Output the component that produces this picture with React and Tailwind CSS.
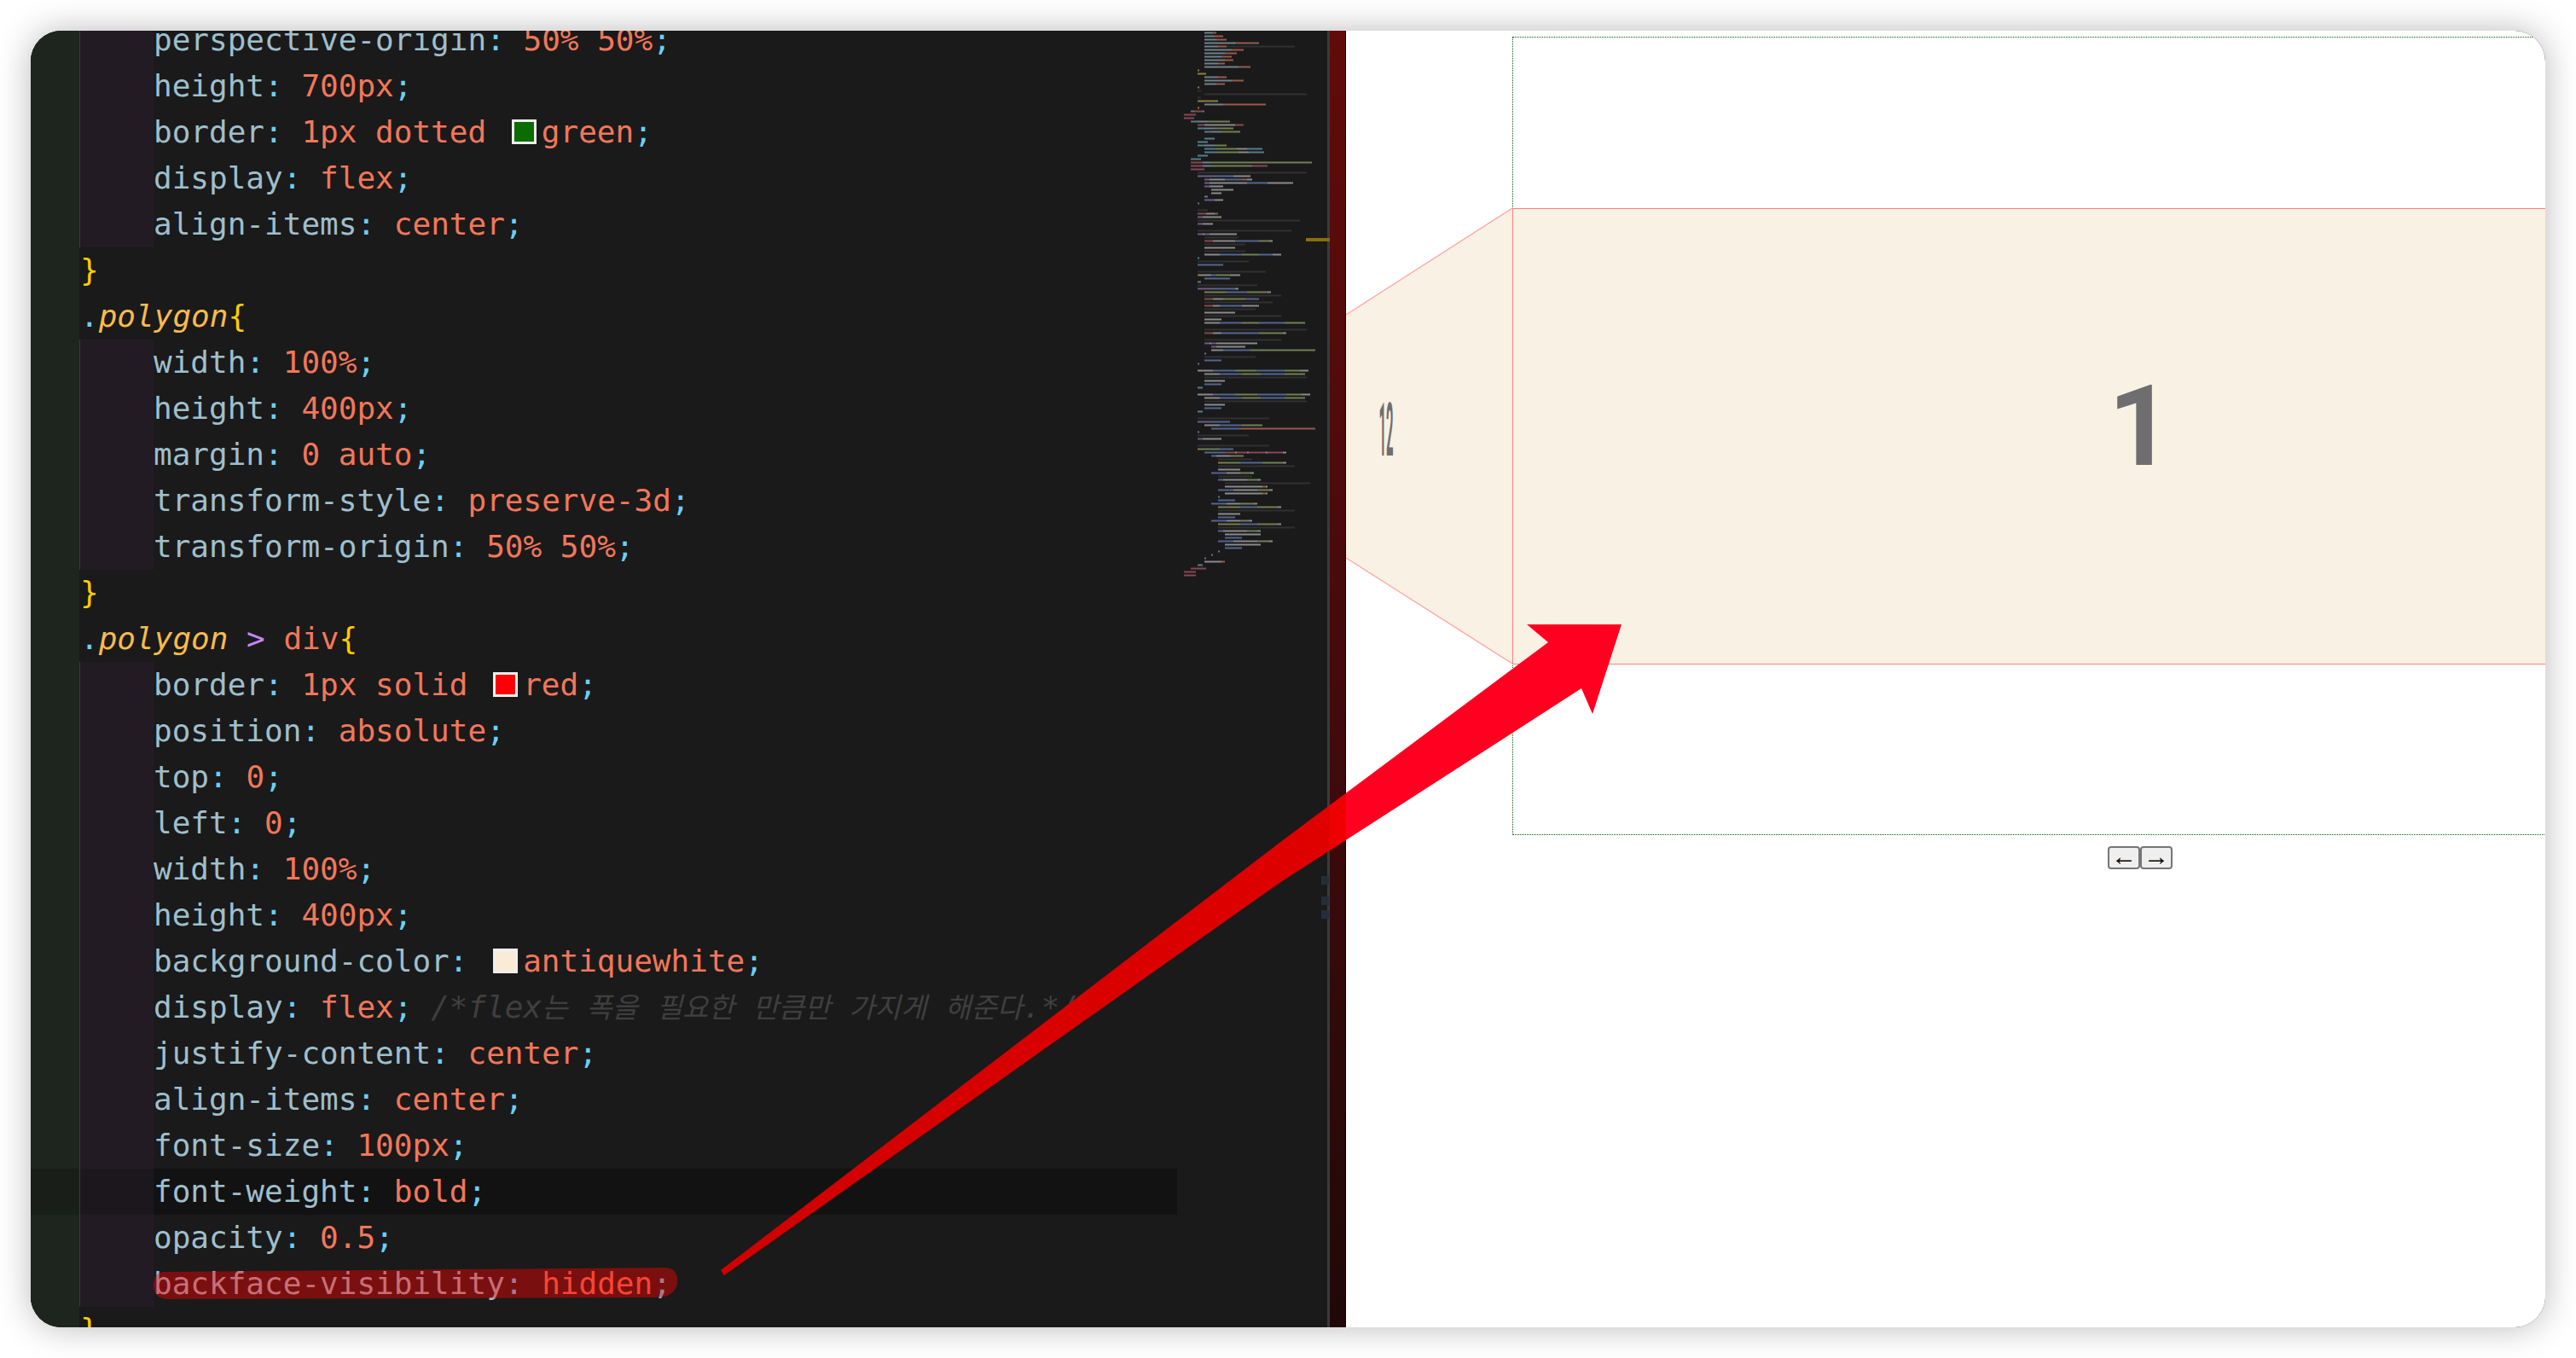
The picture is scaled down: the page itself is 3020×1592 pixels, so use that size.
import React from 'react';

// tiny colour blocks for the editor minimap: "col len+colour ..."
const mapColors = {
  p: '#8fa6b0', o: '#c2705c', c: '#383838', b: '#6680b8', g: '#8ea364', y: '#b59f52',
  w: '#b0b0b0', r: '#ad5668', v: '#8f70ae', t: '#6a9fb2',
};

const minimap = `12 5p 2o|12 6p 5o|12 7p 6o|12 17p 1w 14o|12 8p 5o 40c|12 16p 7o|12 12p 7o|12 10p 6o|12 12p 5o|12 8p 4o|12 20p 7o|8 1y|8 5y|12 8p 5o|12 16p 7o|12 7p 5o|8 1y|8 2c|12 60c|8 2c|8 12y|12 11p 25o|8 1y|4 2t 5r 1t|0 7r|0 6r|4 4t 6p 13g|8 4r 18w 5r|8 4t 6p 11g|12 4t 6p 11g||12 6t|8 6t|8 4t 6p 7g|12 7t 12g 6w 9t|12 7t 13g 6w 9t|8 6t|4 6t|4 7r 5p 59g|4 7r 5p 24g 9r|4 8r|8 64c|8 8v 13b 10w|12 3v 9w 10b 3o 3w|12 3v 22w 12b 15w|12 3v 8w|16 13w|16 6w|12 2t|12 6v 5w|8 1t||8 6c|8 5r 5w 2o|8 3v 11w|8 60c|8 3v 6w||8 55c|8 3v 1w 3v 16w|12 20c|12 5r 13w 14b 6g 2w|12 24c|12 18w|12 24c|12 9w 13b 10g 8b 5w|8 1t|8 30c|8 15b||8 40c|8 1y 7w 3b 8g 6w|12 15b|8 2t|8 35c|8 8v 14b 2w|12 1y 12g 12b 12g 2w|12 45c|12 5r 6w 13g 8b|12 40c|12 5r 4w 13b 10w|12 30c|12 18w|12 45c|12 10w|12 9w 13b 10g 15b 12g||12 60c|12 5r 5w 22b 14g 2w||12 45c|12 3v 1w 3v 24w|16 3v 17w|16 7w 16b 38g|12 1t|12 30c|12 10b|8 1t||8 9w 13b 12g 17b 9g 5w|12 9w 13b 11g 14b 12g|12 60c|12 12w|12 10b|8 3t||8 9w 13b 13g 17b 9g 5w|12 9w 13b 11g 14b 12g|12 60c|12 12w|12 10b|8 3t||8 42c|8 8v 11b|12 9w 13b 12g|16 17b 44o|8 1t|8 30c|8 3v 11w||8 42c|8 1y 12g 8b|12 12b 6r 1w 6r 1w 10r 1w 9r 2w|16 3b 8w 8g|20 20c|20 1y 12g 13b 12g 2w|20 45c|20 13w|16 9b 8w 6g 2w|20 20c|20 3b 14w 6g 2w|24 50c|24 22w 2o 1w|20 9b 14w 7g 2w|24 22w 2o 1w|20 1t|20 10b|16 9b 8w 8g 2w|20 1y 12g 10b 12g 2w|20 45c|20 13w|20 10b|16 9b 8w 5g 2w|20 1y 12g 10b 12g 2w|20 45c|20 3b 14w 6g 2w|24 21w|24 10b|20 9b 14w 7g 2w|24 21w|24 10b|20 1t|16 1t|12 1t|12 10w 2o|8 3t|4 9r|0 7r|0 7r`.split('|');

const Minimap = () => (
  <svg className="block w-[176px] h-[1520px] shrink-0 bg-[#1a1a1a]" viewBox="0 0 176 1520">
    {minimap.map((line, i) => {
      if (!line) return null;
      const parts = line.split(' ');
      let col = Number(parts[0]);
      return parts.slice(1).map((seg, j) => {
        const len = parseInt(seg, 10);
        const x = 8 + col * 2;
        col += len;
        return (
          <rect key={i + '-' + j} x={x} y={1.5 + i * 4} width={len * 2} height={2} opacity={0.75} fill={mapColors[seg[seg.length - 1]]} />
        );
      });
    })}
  </svg>
);

const Key = ({ children }) => <span className="text-[#9fbfcc]">{children}</span>;
const Val = ({ children }) => <span className="text-[#f2775a]">{children}</span>;
const Punc = ({ children }) => <span className="text-[#6ccff6]">{children}</span>;
const Brace = ({ children }) => <span className="text-[#ffcc00]">{children}</span>;
const Sel = ({ children }) => <span className="italic text-[#f8bb4e]">{children}</span>;
const Ko = ({ children }) => <span className="text-[33px]">{children}</span>;

const Swatch = ({ className }) => (
  <span className={`inline-block align-[-2px] w-[29px] h-[29px] ml-[8px] mr-[6px] border-[3px] border-[#eeeeee] ${className}`} />
);

const Line = ({ indent, active, children }) => (
  <div className="flex h-[54px] shrink-0 leading-[54px] whitespace-pre">
    <div className={`w-[57px] shrink-0 ${active ? 'bg-[#191e18]' : 'bg-[#1e241e]'}`} />
    <div className={`w-px shrink-0 ${indent ? 'bg-[#3a3a3c]' : 'bg-[#1a1a1a]'}`} />
    {indent && <div className={`w-[86px] shrink-0 ${active ? 'bg-[#1c171d]' : 'bg-[#231b24]'}`} />}
    <div className={`flex-1 ${active ? 'bg-[#121212]' : ''}`}>{children}</div>
  </div>
);

const Decl = ({ name, value, active, children }) => (
  <Line indent active={active}>
    <Key>{name}</Key>
    <Punc>: </Punc>
    <Val>{value}</Val>
    <Punc>;</Punc>
    {children}
  </Line>
);

const CodePane = () => (
  <div className="flex flex-col w-[1344px] h-[1536px] shrink-0 -mt-[16px] text-[36px] font-['DejaVu_Sans_Mono','Noto_Sans_CJK_KR',monospace] bg-[#1e241e]">
    <div className="flex flex-col bg-[#1a1a1a]">
      <Decl name="perspective-origin" value="50% 50%" />
      <Decl name="height" value="700px" />
      <Line indent>
        <Key>border</Key>
        <Punc>: </Punc>
        <Val>1px dotted </Val>
        <Swatch className="bg-[#0b6d00]" />
        <Val>green</Val>
        <Punc>;</Punc>
      </Line>
      <Decl name="display" value="flex" />
      <Decl name="align-items" value="center" />
      <Line><Brace>{'}'}</Brace></Line>
      <Line><Punc>.</Punc><Sel>polygon</Sel><Brace>{'{'}</Brace></Line>
      <Decl name="width" value="100%" />
      <Decl name="height" value="400px" />
      <Decl name="margin" value="0 auto" />
      <Decl name="transform-style" value="preserve-3d" />
      <Decl name="transform-origin" value="50% 50%" />
      <Line><Brace>{'}'}</Brace></Line>
      <Line>
        <Punc>.</Punc><Sel>polygon</Sel>
        <span className="text-[#c586f0]"> &gt; </span>
        <Val>div</Val><Brace>{'{'}</Brace>
      </Line>
      <Line indent>
        <Key>border</Key>
        <Punc>: </Punc>
        <Val>1px solid </Val>
        <Swatch className="bg-[#fb0007]" />
        <Val>red</Val>
        <Punc>;</Punc>
      </Line>
      <Decl name="position" value="absolute" />
      <Decl name="top" value="0" />
      <Decl name="left" value="0" />
      <Decl name="width" value="100%" />
      <Decl name="height" value="400px" />
      <Line indent>
        <Key>background-color</Key>
        <Punc>: </Punc>
        <Swatch className="bg-[#faebd7]" />
        <Val>antiquewhite</Val>
        <Punc>;</Punc>
      </Line>
      <Decl name="display" value="flex">
        <span className="italic text-[#3f3f3f]"> /*flex<Ko>는</Ko> <Ko>폭을</Ko> <Ko>필요한</Ko> <Ko>만큼만</Ko> <Ko>가지게</Ko> <Ko>해준다</Ko>.*/</span>
      </Decl>
      <Decl name="justify-content" value="center" />
      <Decl name="align-items" value="center" />
      <Decl name="font-size" value="100px" />
      <Decl name="font-weight" value="bold" active />
      <Decl name="opacity" value="0.5" />
      <Decl name="backface-visibility" value="hidden" />
      <Line><Brace>{'}'}</Brace></Line>
    </div>
  </div>
);

const Scrollbar = () => (
  <div className="relative flex h-full shrink-0">
    <div className="w-[3px] bg-[#3a3a3a]" />
    <div className="w-[18px] bg-gradient-to-b from-[#620b07] via-[#440a0c] to-[#200808]" />
    <div className="w-px bg-black" />
    {/* overview ruler marks sit over the minimap edge */}
    <div className="absolute -left-[25px] top-[243px] w-[28px] h-[4px] bg-[#8a6d10]" />
    <div className="absolute -left-[7px] top-[991px] w-[9px] h-[10px] bg-[#262c3a]" />
    <div className="absolute -left-[7px] top-[1015px] w-[9px] h-[10px] bg-[#262c3a]" />
    <div className="absolute -left-[7px] top-[1031px] w-[9px] h-[10px] bg-[#262c3a]" />
  </div>
);

const Preview = () => (
  <div className="relative flex-1 min-w-0 h-full bg-white overflow-hidden font-['Roboto',sans-serif]">
    <div className="w-[1472px] ml-[195px] pt-[7px]">
      <div className="flex items-center w-full h-[936px] border border-dotted border-[#005f00]">
        <div className="flex items-center justify-center pb-[22px] -mx-px w-[1472px] shrink-0 h-[535px] border border-[#ff7d7d] bg-[#f9f1e4] text-[131px] leading-none font-bold text-[#6e6e6e] z-10">
          1
        </div>
      </div>
      <div className="flex justify-center mt-[13px] font-['Liberation_Sans',sans-serif]">
        <button className="w-[38px] h-[27px] flex items-center justify-center pb-[3px] rounded-[4px] border-2 border-[#767676] bg-[#efefef] text-[30px] leading-none text-black">←</button>
        <button className="w-[38px] h-[27px] flex items-center justify-center pb-[3px] rounded-[4px] border-2 border-[#767676] bg-[#efefef] text-[30px] leading-none text-black">→</button>
      </div>
    </div>

    {/* side face of the carousel, seen in perspective */}
    <svg className="absolute left-0 top-0 w-[197px] h-[760px] z-20" viewBox="0 0 197 760">
      <polygon points="195,208 0,333 0,618 195,742" fill="#f9f1e4" />
      <path d="M195 208 L0 333 M0 618 L195 742" stroke="#ffa5a5" strokeWidth="1.4" fill="none" />
      <path d="M195.5 208 V742" stroke="#ff7d7d" strokeWidth="1" fill="none" />
    </svg>
    <span className="absolute left-[47px] top-[468px] -translate-x-1/2 -translate-y-1/2 scale-x-[0.17] text-[88px] leading-none font-bold text-[#6e6e6e] z-20">
      12
    </span>
  </div>
);

// hand-drawn annotation over the screenshot
const Annotation = () => (
  <svg className="absolute inset-0 w-full h-full z-30 pointer-events-none" viewBox="36 36 2948 1520">
    <defs>
      <linearGradient id="arrowFill" gradientUnits="userSpaceOnUse" x1="847" y1="0" x2="1901" y2="0">
        <stop offset="0" stopColor="#d00000" />
        <stop offset="0.675" stopColor="#df0000" />
        <stop offset="0.676" stopColor="#ee0000" />
        <stop offset="0.693" stopColor="#ee0000" />
        <stop offset="0.694" stopColor="#ff0020" />
      </linearGradient>
    </defs>
    <path d="M192 1491 L780 1486 Q796 1487 794 1505 Q790 1521 770 1521 L196 1523 Q180 1522 180 1507 Q180 1492 192 1491 Z" fill="#ff0000" fillOpacity="0.42" />
    <polygon points="845,1489 1500,988 1815,753 1790,732 1901,732 1867,837 1854,807 1500,1035 849,1495" fill="url(#arrowFill)" />
  </svg>
);

export default function App() {
  return (
    <div className="w-[3020px] h-[1592px] p-[36px] bg-white">
      <div className="relative flex w-full h-full rounded-[36px] overflow-hidden shadow-[0_0_40px_rgba(0,0,0,0.28)] bg-[#1a1a1a]">
        <CodePane />
        <Minimap />
        <Scrollbar />
        <Preview />
        <Annotation />
      </div>
    </div>
  );
}
